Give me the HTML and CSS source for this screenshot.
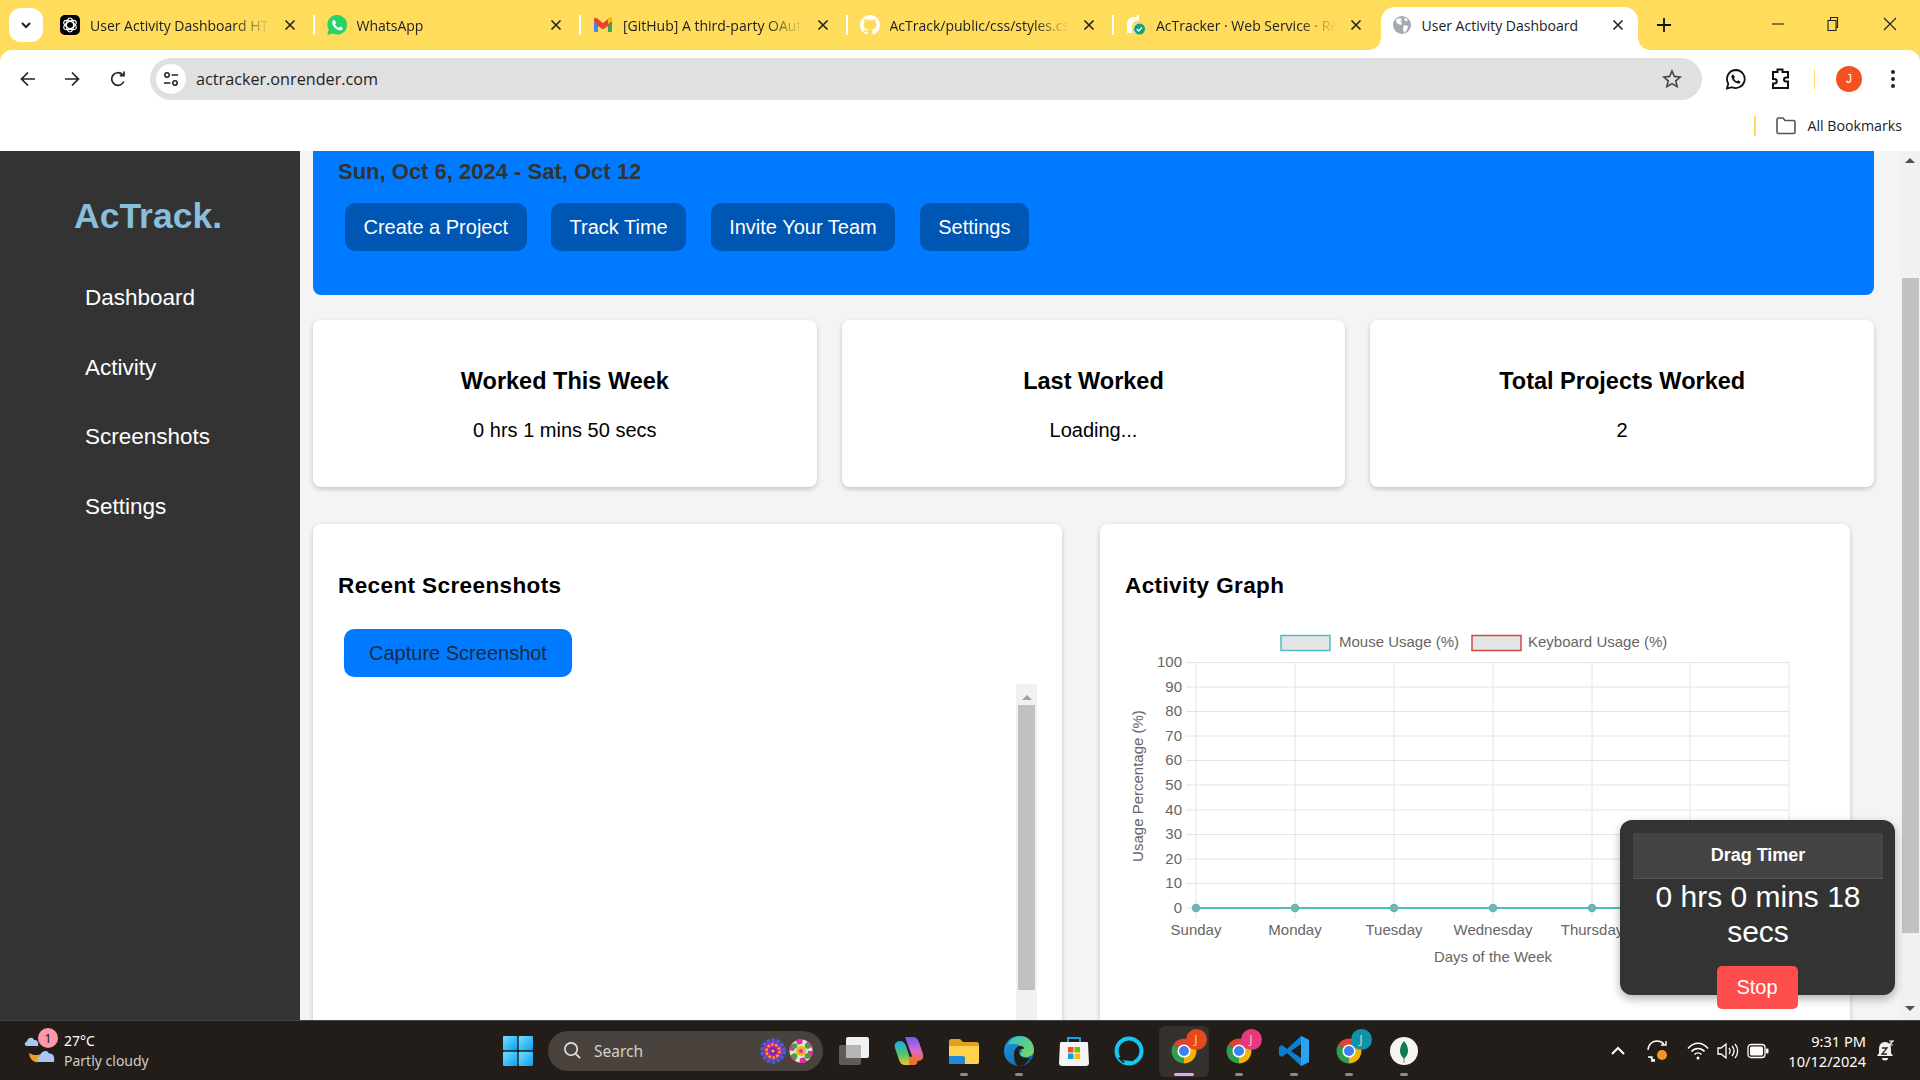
FILE: index.html
```html
<!DOCTYPE html>
<html lang="en">
<head>
    <meta charset="UTF-8">
    <meta name="viewport" content="width=device-width, initial-scale=1.0">
    <title>User Activity Dashboard</title>
    <link rel="stylesheet" href="styles.css">
</head>
<body>
    <!-- Shared icons -->
    <svg class="sprite" aria-hidden="true">
        <defs>
            <linearGradient id="winGrad" x1="0" y1="0" x2="1" y2="1">
                <stop offset="0" stop-color="#6fe3ff"/>
                <stop offset="1" stop-color="#0f9bf5"/>
            </linearGradient>
            <linearGradient id="edgeGrad" x1="0" y1="0" x2="1" y2="1">
                <stop offset="0" stop-color="#1b9de2"/>
                <stop offset="1" stop-color="#0c59a4"/>
            </linearGradient>
            <linearGradient id="edgeGreen" x1="0" y1="0" x2="1" y2="1">
                <stop offset="0" stop-color="#35c1c8"/>
                <stop offset="1" stop-color="#7ad956"/>
            </linearGradient>
            <linearGradient id="copilotA" x1="0" y1="0" x2="0" y2="1">
                <stop offset="0" stop-color="#1fa8ee"/>
                <stop offset=".55" stop-color="#52c46a"/>
                <stop offset="1" stop-color="#f5c33b"/>
            </linearGradient>
            <linearGradient id="copilotB" x1="0" y1="0" x2="0" y2="1">
                <stop offset="0" stop-color="#6a5cf0"/>
                <stop offset=".55" stop-color="#d66ad0"/>
                <stop offset="1" stop-color="#f2703a"/>
            </linearGradient>
            <symbol id="ic-chrome" viewBox="0 0 48 48">
                <path fill="#db4437" d="M24 24 6.700 14A20 20 0 0 1 41.300 14z"/>
                <path fill="#f4b400" d="M24 24 41.300 14A20 20 0 0 1 24 44z"/>
                <path fill="#2f9e4f" d="M24 24 24 44A20 20 0 0 1 6.700 14z"/>
                <circle cx="24" cy="24" r="10.500" fill="#fff"/>
                <circle cx="24" cy="24" r="8" fill="#3f7fee"/>
            </symbol>
            <symbol id="ic-close" viewBox="0 0 12 12">
                <path d="M1.500 1.500 10.500 10.500M10.500 1.500 1.500 10.500" fill="none" stroke="#222" stroke-width="1.600"/>
            </symbol>
        </defs>
    </svg>

    <!-- Tab strip -->
    <div class="tabstrip">
        <div class="tab-search">
            <svg width="12" height="12" viewBox="0 0 12 12"><path d="M2 4 6 8 10 4" fill="none" stroke="#222" stroke-width="2"/></svg>
        </div>
        <div class="tab">
            <svg class="favicon" viewBox="0 0 20 20">
                <rect width="20" height="20" rx="5" fill="#000"/>
                <g fill="none" stroke="#fff" stroke-width="1.200">
                    <ellipse cx="10" cy="10" rx="3.600" ry="7"/>
                    <ellipse cx="10" cy="10" rx="3.600" ry="7" transform="rotate(60 10 10)"/>
                    <ellipse cx="10" cy="10" rx="3.600" ry="7" transform="rotate(120 10 10)"/>
                </g>
            </svg>
            <span class="tab-title">User Activity Dashboard HTML</span>
            <svg class="tab-close"><use href="#ic-close"/></svg>
        </div>
        <div class="tab">
            <svg class="favicon" viewBox="0 0 20 20">
                <path fill="#25d366" d="M10 0a9.600 9.600 0 0 0-8.300 14.500L.3 20l5.600-1.400A9.800 9.800 0 1 0 10 0z"/>
                <path fill="#fff" d="M6.800 4.800c-.5 0-1.600 1-1.600 2.700 0 3 3.700 7.300 7.700 7.900 1.500.2 2.900-1 2.900-2.200 0-.5-2.300-1.700-2.700-1.600-.4.1-.9 1.200-1.300 1.200-1 0-3.500-2.200-3.800-3.300 0-.4 1-1 1-1.500 0-.4-1-3.200-2.200-3.200z"/>
            </svg>
            <span class="tab-title">WhatsApp</span>
            <svg class="tab-close"><use href="#ic-close"/></svg>
        </div>
        <div class="tab">
            <svg class="favicon" viewBox="0 0 20 20">
                <path fill="#4285f4" d="M1 17V5l4 3v9H2a1 1 0 0 1-1-1z"/>
                <path fill="#34a853" d="M15 17V8l4-3v11a1 1 0 0 1-1 1z"/>
                <path fill="#ea4335" d="M5 11 1 6V4.500C1 3 2.700 2.300 3.800 3.200L10 8l6.200-4.800c1.100-.9 2.800-.2 2.800 1.300V6l-4 5-5 3.500z"/>
                <path fill="#fbbc04" d="M15 3.800 19 3v3l-4 3z"/>
            </svg>
            <span class="tab-title">[GitHub] A third-party OAuth application</span>
            <svg class="tab-close"><use href="#ic-close"/></svg>
        </div>
        <div class="tab">
            <svg class="favicon" viewBox="0 0 16 16">
                <path fill="#fff" d="M8 0C3.58 0 0 3.58 0 8c0 3.54 2.29 6.53 5.47 7.59.4.07.55-.17.55-.38 0-.19-.01-.82-.01-1.49-2.01.37-2.53-.49-2.69-.94-.09-.23-.48-.94-.82-1.13-.28-.15-.68-.52-.01-.53.63-.01 1.08.58 1.23.82.72 1.21 1.87.87 2.33.66.07-.52.28-.87.51-1.07-1.78-.2-3.64-.89-3.64-3.95 0-.87.31-1.59.82-2.15-.08-.2-.36-1.02.08-2.12 0 0 .67-.21 2.2.82.64-.18 1.32-.27 2-.27.68 0 1.36.09 2 .27 1.53-1.04 2.2-.82 2.2-.82.44 1.1.16 1.92.08 2.12.51.56.82 1.27.82 2.15 0 3.07-1.87 3.75-3.65 3.95.29.25.54.73.54 1.48 0 1.07-.01 1.93-.01 2.2 0 .21.15.46.55.38A8.013 8.013 0 0 0 16 8c0-4.42-3.58-8-8-8z"/>
            </svg>
            <span class="tab-title">AcTrack/public/css/styles.css</span>
            <svg class="tab-close"><use href="#ic-close"/></svg>
        </div>
        <div class="tab tab-nosep">
            <svg class="favicon" viewBox="0 0 20 20">
                <path fill="#fff" d="M1 18V9c0-4 3-7 7-7h3V0h2v6h-2c-3 0-5 2-5 5v7z"/>
                <path fill="#fff" d="M8 18v-6c0-2 1-3 3-3h2v9z"/>
                <circle cx="13.500" cy="14" r="5.500" fill="#10a37f"/>
                <path d="M10.800 14l2 2 3.200-3.600" fill="none" stroke="#fff" stroke-width="1.400"/>
            </svg>
            <span class="tab-title">AcTracker · Web Service · Render</span>
            <svg class="tab-close"><use href="#ic-close"/></svg>
        </div>
        <div class="tab tab-active">
            <svg class="favicon" viewBox="0 0 20 20">
                <circle cx="10" cy="10" r="9" fill="#a3a9b3"/>
                <path fill="#fff" d="M4 4.500 8 3l2 1.500-1.500 2L10 8l-1 2-3-1-2-2zM12 10l4 1-1 4-3 3-1-4zM13 2.500l3 2.500-2 1.500-2-2z"/>
            </svg>
            <span class="tab-title">User Activity Dashboard</span>
            <svg class="tab-close"><use href="#ic-close"/></svg>
        </div>
        <svg class="tab-new" viewBox="0 0 14 14"><path d="M7 0V14M0 7H14" stroke="#111" stroke-width="1.800"/></svg>
        <div class="win-controls">
            <div class="win-btn"><svg width="14" height="14" viewBox="0 0 14 14"><path d="M1 7H13" stroke="#222" stroke-width="1.100"/></svg></div>
            <div class="win-btn"><svg width="14" height="16" viewBox="0 0 14 16"><path d="M2 4.500h8v10H2zM4.500 4.500V1.500h7v10H10" fill="none" stroke="#222" stroke-width="1.100"/></svg></div>
            <div class="win-btn"><svg width="14" height="14" viewBox="0 0 14 14"><path d="M1 1 13 13M13 1 1 13" stroke="#222" stroke-width="1.100"/></svg></div>
        </div>
    </div>

    <!-- Address bar -->
    <div class="toolbar">
        <div class="nav-btn"><svg width="18" height="18" viewBox="0 0 18 18"><path d="M16 9H3M9 2.500 2.500 9 9 15.500" fill="none" stroke="#222" stroke-width="1.700"/></svg></div>
        <div class="nav-btn"><svg width="18" height="18" viewBox="0 0 18 18"><path d="M2 9H15M9 2.500 15.500 9 9 15.500" fill="none" stroke="#222" stroke-width="1.700"/></svg></div>
        <div class="nav-btn nav-reload"><svg width="18" height="18" viewBox="0 0 18 18"><path d="M14.800 11.500A6.300 6.300 0 1 1 13.500 4.600M15 1.500v4.200h-4.200" fill="none" stroke="#222" stroke-width="1.700"/></svg></div>
        <div class="omnibox">
            <div class="omni-tune">
                <svg width="18" height="18" viewBox="0 0 18 18"><g fill="none" stroke="#222" stroke-width="1.500"><circle cx="5" cy="5" r="2.200"/><path d="M9.500 5H16M2 13H8.500"/><circle cx="13" cy="13" r="2.200"/></g></svg>
            </div>
            <span class="omni-url">actracker.onrender.com</span>
            <svg class="omni-star" viewBox="0 0 20 20"><path d="M10 2l2.400 5.400 5.800.6-4.400 3.900 1.300 5.700L10 14.600l-5.100 3 1.300-5.700L1.800 8l5.800-.6z" fill="none" stroke="#444" stroke-width="1.600"/></svg>
        </div>
        <div class="tool-btn tool-first">
            <svg width="22" height="22" viewBox="0 0 22 22"><path d="M11 2a9 9 0 0 0-7.700 13.600L2 20.500l5-1.300A9 9 0 1 0 11 2z" fill="none" stroke="#111" stroke-width="1.800"/><path d="M8 6.500c-1 0-1.500 1-1.500 2 0 3 3.500 7 7 7 1.200 0 2-.8 2-1.800l-2.300-1.400-1.200 1c-1 0-2.800-2-3-3l1-1.200z" fill="#111"/></svg>
        </div>
        <div class="tool-btn">
            <svg width="20" height="24" viewBox="0 0 20 24"><path d="M2 5h4.500V2.500h5V5H17v5.500h-2a2 2 0 0 0 0 4h2V21H2v-4.500h1.500a2.200 2.200 0 0 0 0-4.500H2z" fill="none" stroke="#111" stroke-width="2"/></svg>
        </div>
        <div class="tool-sep"></div>
        <div class="tool-btn"><span class="avatar">J</span></div>
        <div class="tool-btn">
            <svg width="6" height="20" viewBox="0 0 6 20"><circle cx="3" cy="3" r="2" fill="#222"/><circle cx="3" cy="10" r="2" fill="#222"/><circle cx="3" cy="17" r="2" fill="#222"/></svg>
        </div>
    </div>

    <!-- Bookmarks bar -->
    <div class="bookmarks">
        <div class="bookmarks-sep"></div>
        <svg class="bookmarks-folder" viewBox="0 0 20 18"><path d="M1 2.500C1 1.700 1.700 1 2.500 1H7l2 2.500h8.500c.8 0 1.500.7 1.500 1.500v10c0 .8-.7 1.500-1.500 1.500h-15C1.700 16.500 1 15.800 1 15z" fill="none" stroke="#555" stroke-width="1.600"/></svg>
        <span class="bookmarks-text">All Bookmarks</span>
    </div>

    <!-- The page itself -->
    <div class="page">
        <div class="sidebar">
            <h1 class="logo">AcTrack.</h1>
            <a href="#">Dashboard</a>
            <a href="#">Activity</a>
            <a href="#">Screenshots</a>
            <a href="#">Settings</a>
        </div>

        <div class="content">
            <div class="banner">
                <h2>Sun, Oct 6, 2024 - Sat, Oct 12</h2>
                <div class="banner-actions">
                    <button class="banner-btn">Create a Project</button>
                    <button class="banner-btn">Track Time</button>
                    <button class="banner-btn">Invite Your Team</button>
                    <button class="banner-btn">Settings</button>
                </div>
            </div>

            <div class="stats">
                <div class="stat-card">
                    <h3>Worked This Week</h3>
                    <p>0 hrs 1 mins 50 secs</p>
                </div>
                <div class="stat-card">
                    <h3>Last Worked</h3>
                    <p>Loading...</p>
                </div>
                <div class="stat-card">
                    <h3>Total Projects Worked</h3>
                    <p>2</p>
                </div>
            </div>

            <div class="panels">
                <div class="panel">
                    <h3>Recent Screenshots</h3>
                    <button class="capture-btn">Capture Screenshot</button>
                    <div class="screenshots">
                        <div class="inner-scroll">
                            <span class="arrow-up"></span>
                            <span class="inner-thumb"></span>
                        </div>
                    </div>
                </div>
                <div class="panel">
                    <h3>Activity Graph</h3>
                    <svg class="chart" width="700" height="390" viewBox="0 0 700 390">
                        <!-- legend -->
                        <rect x="156" y="15.500" width="49" height="15" fill="#e5e5e5" stroke="#4bc0c0" stroke-width="1.500"/>
                        <text x="214" y="27" class="chart-label">Mouse Usage (%)</text>
                        <rect x="347" y="15.500" width="49" height="15" fill="#e5e5e5" stroke="#cf4a4a" stroke-width="1.500"/>
                        <text x="403" y="27" class="chart-label">Keyboard Usage (%)</text>
                        <!-- grid -->
                        <path class="chart-grid" d="M61 42.500H664M61 67H664M61 91.500H664M61 116H664M61 140.500H664M61 165H664M61 190H664M61 214.500H664M61 239H664M61 263.500H664M61 288H664"/>
                        <path class="chart-grid" d="M71 42V298M170 42V298M269 42V298M368 42V298M467 42V298M565 42V298M664 42V298"/>
                        <!-- y axis -->
                        <g class="chart-label chart-y">
                            <text x="57" y="47">100</text>
                            <text x="57" y="72">90</text>
                            <text x="57" y="96">80</text>
                            <text x="57" y="121">70</text>
                            <text x="57" y="145">60</text>
                            <text x="57" y="170">50</text>
                            <text x="57" y="195">40</text>
                            <text x="57" y="219">30</text>
                            <text x="57" y="244">20</text>
                            <text x="57" y="268">10</text>
                            <text x="57" y="293">0</text>
                        </g>
                        <text class="chart-label chart-mid" transform="translate(18 166) rotate(-90)">Usage Percentage (%)</text>
                        <!-- x axis, the last two days sit under the timer -->
                        <g class="chart-label chart-mid">
                            <text x="71" y="315">Sunday</text>
                            <text x="170" y="315">Monday</text>
                            <text x="269" y="315">Tuesday</text>
                            <text x="368" y="315">Wednesday</text>
                            <text x="467" y="315">Thursday</text>
                            <text x="368" y="342">Days of the Week</text>
                        </g>
                        <!-- data, all zero so far -->
                        <path d="M71 288H664" stroke="#4bc0c0" stroke-width="2"/>
                        <g fill="#8fa8a8" stroke="#4bc0c0" stroke-width="1.500">
                            <circle cx="71" cy="288" r="3.500"/>
                            <circle cx="170" cy="288" r="3.500"/>
                            <circle cx="269" cy="288" r="3.500"/>
                            <circle cx="368" cy="288" r="3.500"/>
                            <circle cx="467" cy="288" r="3.500"/>
                        </g>
                    </svg>
                </div>
            </div>
        </div>

        <div class="page-scroll">
            <span class="arrow-up"></span>
            <span class="page-thumb"></span>
            <span class="arrow-down"></span>
        </div>

        <!-- Floating timer -->
        <div class="timer">
            <div class="timer-head">Drag Timer</div>
            <div class="timer-value">0 hrs 0 mins 18 secs</div>
            <button class="timer-stop">Stop</button>
        </div>
    </div>

    <!-- Windows taskbar -->
    <div class="taskbar">
        <div class="weather">
            <svg class="weather-icon" viewBox="0 0 34 34">
                <path d="M5 19c3 2 8 3 12 1l3 4c-5 7-14 5-15-5z" fill="#f09a28"/>
                <path d="M3 12c-3 0-3-4 0-4.500C3 4 9 2 10 6c3-.5 5 2 4 6z" fill="#a9c7f2"/>
                <path d="M16 28c-3 0-4-5 0-5.500 0-5 7-8 9-3 4-.5 6 3 5 8.500z" fill="#a9c7f2"/>
            </svg>
            <span class="weather-badge">1</span>
            <div class="weather-text">
                <span class="weather-temp">27°C</span>
                <span class="weather-desc">Partly cloudy</span>
            </div>
        </div>

        <div class="app">
            <svg class="app-icon" viewBox="0 0 30 30"><g fill="url(#winGrad)"><rect x="0" y="0" width="14.300" height="14.300" rx="1"/><rect x="15.700" y="0" width="14.300" height="14.300" rx="1"/><rect x="0" y="15.700" width="14.300" height="14.300" rx="1"/><rect x="15.700" y="15.700" width="14.300" height="14.300" rx="1"/></g></svg>
        </div>

        <div class="searchbox">
            <svg class="search-glass" viewBox="0 0 20 20"><circle cx="8.500" cy="8.500" r="6.500" fill="none" stroke="#e0e0e0" stroke-width="1.800"/><path d="M13.500 13.500 18 18" stroke="#e0e0e0" stroke-width="2"/></svg>
            <span class="search-text">Search</span>
            <svg class="mandala" viewBox="0 0 26 26">
                <circle cx="13" cy="13" r="10" fill="#b524a8"/>
                <circle cx="13" cy="13" r="11" fill="none" stroke="#3f62e0" stroke-width="3.500" stroke-dasharray="3.500 1.500"/>
                <circle cx="13" cy="13" r="6.500" fill="none" stroke="#f0a820" stroke-width="2.500" stroke-dasharray="2.500 1.500"/>
                <circle cx="13" cy="13" r="3.500" fill="#7a2aa0"/>
                <circle cx="13" cy="13" r="1.500" fill="#f5c030"/>
            </svg>
            <svg class="mandala" viewBox="0 0 26 26">
                <circle cx="13" cy="13" r="11.500" fill="#d9ead0"/>
                <circle cx="13" cy="13" r="9.500" fill="none" stroke="#e22fa0" stroke-width="5" stroke-dasharray="6 4"/>
                <g fill="#3aa83a"><circle cx="6.500" cy="8" r="2.800"/><circle cx="19.500" cy="8" r="2.800"/><circle cx="6.500" cy="18" r="2.800"/><circle cx="19.500" cy="18" r="2.800"/></g>
                <circle cx="13" cy="13" r="5" fill="#f5b025"/>
                <circle cx="13" cy="13" r="2" fill="#e22fa0"/>
            </svg>
        </div>

        <div class="app">
            <svg class="app-icon" viewBox="0 0 30 30">
                <rect x="0" y="9" width="22" height="20" rx="2" fill="#5c5c5c"/>
                <rect x="7" y="1" width="23" height="21" rx="2" fill="#f1f1f1"/>
                <rect x="7" y="9" width="15" height="13" fill="#b5b5b5"/>
            </svg>
        </div>
        <div class="app">
            <svg class="app-icon" viewBox="0 0 30 30">
                <path d="M11 1h8c3 0 5 2 6 5l4 12c1 4-1 7-5 7-3 0-5-2-6-5z" fill="url(#copilotB)"/>
                <path d="M19 29h-8c-3 0-5-2-6-5L1 12C0 8 2 5 6 5c3 0 5 2 6 5l3 9c1 4 2 8 4 10z" fill="url(#copilotA)"/>
                <path d="M15 29h5c3 0 4-3 3-5l-2-4-6 1z" fill="#f2703a"/>
            </svg>
        </div>
        <div class="app app-open">
            <svg class="app-icon" viewBox="0 0 30 30">
                <path d="M0 5c0-1 1-2 2-2h9l3 3h14c1 0 2 1 2 2v18c0 1-1 2-2 2H2c-1 0-2-1-2-2z" fill="#e0a020"/>
                <path d="M0 10h30v16c0 1-1 2-2 2H2c-1 0-2-1-2-2z" fill="#ffd24d"/>
                <path d="M0 20h14c1 0 2 1 2 2v6H2c-1 0-2-1-2-2z" fill="#1d8ad8"/>
            </svg>
        </div>
        <div class="app app-open">
            <svg class="app-icon" viewBox="0 0 30 30">
                <circle cx="15" cy="15" r="15" fill="url(#edgeGrad)"/>
                <path d="M4 8C7 2 12 0 16 0c8 0 14 6 14 14 0 5-4 7-8 7-3 0-6-1-6-3 0-1 2-1 2-4 0-3-3-6-7-6-3 0-5 0-7 0z" fill="url(#edgeGreen)"/>
                <path d="M10 18c0-5 3-8 7-8 2 0 3 1 3 3-2-1-5 0-5 3 0 4 5 7 11 6-3 5-7 8-11 8-3 0-5-5-5-12z" fill="#221c18"/>
            </svg>
        </div>
        <div class="app">
            <svg class="app-icon" viewBox="0 0 30 30">
                <path d="M9 6V2h12v4" fill="none" stroke="#12a5e8" stroke-width="2"/>
                <path d="M1 7c0-1 1-1 1-1h26s1 0 1 1l1 20c0 2-1 3-3 3H3c-2 0-3-1-3-3z" fill="#f5f5f5"/>
                <rect x="9" y="11" width="5.500" height="5.500" fill="#f25022"/>
                <rect x="15.500" y="11" width="5.500" height="5.500" fill="#7fba00"/>
                <rect x="9" y="17.500" width="5.500" height="5.500" fill="#00a4ef"/>
                <rect x="15.500" y="17.500" width="5.500" height="5.500" fill="#ffb900"/>
            </svg>
        </div>
        <div class="app">
            <svg class="app-icon" viewBox="0 0 30 30">
                <circle cx="15" cy="15" r="12.500" fill="none" stroke="#12c8f0" stroke-width="4"/>
                <path d="M4 22l5 5 5-3-6-4z" fill="#221c18"/>
                <path d="M8 24l8 5 1-4z" fill="#12c8f0"/>
            </svg>
        </div>
        <div class="app app-active">
            <svg class="app-icon"><use href="#ic-chrome"/></svg>
            <span class="app-badge badge-orange">J</span>
        </div>
        <div class="app app-open">
            <svg class="app-icon"><use href="#ic-chrome"/></svg>
            <span class="app-badge badge-pink">J</span>
        </div>
        <div class="app app-open">
            <svg class="app-icon" viewBox="0 0 30 30">
                <path d="M22 0 30 4V26L22 30 8 17 3 21 0 19V11L3 9 8 13z" fill="#0a7fd0"/>
                <path d="M22 0 30 4V26L22 30z" fill="#2aa4f0"/>
                <path d="M22 8V22L12 15z" fill="#221c18"/>
            </svg>
        </div>
        <div class="app app-open">
            <svg class="app-icon"><use href="#ic-chrome"/></svg>
            <span class="app-badge badge-teal">J</span>
        </div>
        <div class="app app-open">
            <svg class="app-icon" viewBox="0 0 30 30">
                <circle cx="15" cy="15" r="14" fill="#f5f5f0"/>
                <path d="M15 5c3 3 4 7 4 10 0 3-2 6-4 8-2-2-4-5-4-8 0-3 1-7 4-10z" fill="#0f7a52"/>
                <path d="M15 22v5" stroke="#8a8a80" stroke-width="1"/>
            </svg>
        </div>

        <div class="tray">
            <svg class="tray-icon tray-chevron" viewBox="0 0 16 10"><path d="M2 8 8 2 14 8" fill="none" stroke="#fff" stroke-width="2"/></svg>
            <svg class="tray-icon tray-sync" viewBox="0 0 24 24">
                <path d="M2 11C2 5 7 2 11 2c3 0 5 1 7 3M20 2v4h-5M5 22h4M2 18h4v4M4 18c2 2 3 3 5 3" fill="none" stroke="#fff" stroke-width="1.400"/>
                <circle cx="16" cy="16" r="5" fill="#f7931e"/>
            </svg>
            <svg class="tray-icon tray-wifi" viewBox="0 0 22 18">
                <g fill="none" stroke="#fff" stroke-width="1.500"><path d="M1 6.500C7-.5 15-.5 21 6.500"/><path d="M4.500 9.500C8 5.500 14 5.500 17.500 9.500"/><path d="M7.500 12.500C9.500 10.500 12.500 10.500 14.500 12.500"/></g>
                <circle cx="11" cy="16" r="1.500" fill="#fff"/>
            </svg>
            <svg class="tray-icon tray-vol" viewBox="0 0 22 18">
                <path d="M1 6v6h3l5 4V2L4 6z" fill="none" stroke="#fff" stroke-width="1.300"/>
                <path d="M12 6c1.500 2 1.500 4 0 6M15 4c2.500 3 2.500 7 0 10M18 2c3.500 4 3.500 10 0 14" fill="none" stroke="#fff" stroke-width="1.300"/>
            </svg>
            <svg class="tray-icon tray-batt" viewBox="0 0 22 16">
                <rect x="1" y="1.500" width="17" height="13" rx="3" fill="none" stroke="#fff" stroke-width="1.300"/>
                <rect x="3" y="3.500" width="13" height="9" rx="1.500" fill="#fff"/>
                <rect x="19" y="5.500" width="2.500" height="5" rx="1" fill="#fff"/>
            </svg>
            <div class="clock">
                <span>9:31 PM</span>
                <span>10/12/2024</span>
            </div>
            <svg class="tray-icon tray-bell" viewBox="0 0 20 24">
                <path d="M10 3c-4 0-6 3-6 7v4l-2 3h16l-2-3v-4c0-4-2-7-6-7z" fill="#f0f0f0"/>
                <path d="M7 19h6a3 2.500 0 0 1-6 0z" fill="#f0f0f0"/>
                <path d="M7 9h5l-5 6h5" fill="none" stroke="#222" stroke-width="1.300"/>
                <path d="M14 2h4l-4 4h4" fill="none" stroke="#fff" stroke-width="1.200"/>
            </svg>
        </div>
    </div>
</body>
</html>
```

FILE: styles.css
```css
/* Basic reset */
* {
    margin: 0;
    padding: 0;
    box-sizing: border-box;
}

body {
    width: 1920px;
    height: 1080px;
    overflow: hidden;
    display: flex;
    flex-direction: column;
    background-color: #ffdc5c;
    font-family: "Liberation Sans", Arial, sans-serif;
}

.sprite {
    width: 0;
    height: 0;
    flex: none;
}

/* Browser tab strip */
.tabstrip {
    height: 50px;
    flex: none;
    display: flex;
    align-items: flex-end;
    padding-left: 9px;
    font-family: "Open Sans", sans-serif;
    font-size: 14px;
    color: #222;
}

.tab-search {
    width: 34px;
    height: 34px;
    margin: 0 5px 8px 0;
    background-color: #fff;
    border-radius: 12px;
    display: flex;
    justify-content: center;
    align-items: center;
}

.tab {
    width: 266.5px;
    height: 43px;
    padding: 0 15px 7px 12px;
    display: flex;
    align-items: center;
    position: relative;
}

.tab::after {
    content: "";
    position: absolute;
    right: 0;
    top: 8px;
    width: 2px;
    height: 20px;
    background-color: #fff;
}

.tab-nosep::after {
    display: none;
}

.favicon {
    width: 20px;
    height: 20px;
    flex: none;
    margin-right: 10px;
}

.tab-title {
    flex: 1;
    min-width: 0;
    margin-right: 10px;
    white-space: nowrap;
    overflow: hidden;
    -webkit-mask-image: linear-gradient(to right, #000 80%, transparent 100%);
    mask-image: linear-gradient(to right, #000 80%, transparent 100%);
}

.tab-close {
    width: 12px;
    height: 12px;
    margin: 0 4px;
    flex: none;
}

.tab-active {
    width: 257px;
    padding: 0 10px 7px 11px;
    background-color: #fff;
    border-radius: 14px 14px 0 0;
}

.tab-active .tab-title {
    -webkit-mask-image: none;
    mask-image: none;
}

/* little flares at the bottom of the active tab */
.tab-active::before,
.tab-active::after {
    content: "";
    display: block;
    position: absolute;
    top: auto;
    bottom: 0;
    width: 12px;
    height: 12px;
    background-color: transparent;
}

.tab-active::before {
    left: -12px;
    background-image: radial-gradient(circle at 0 0, #ffdc5c 11.5px, #fff 12px);
}

.tab-active::after {
    right: -12px;
    background-image: radial-gradient(circle at 100% 0, #ffdc5c 11.5px, #fff 12px);
}

.tab-new {
    width: 14px;
    height: 14px;
    margin: 0 0 18px 19px;
    flex: none;
}

.win-controls {
    margin-left: auto;
    display: flex;
    height: 50px;
}

.win-btn {
    width: 55px;
    padding-bottom: 2px;
    display: flex;
    justify-content: center;
    align-items: center;
}

.win-btn:last-child {
    width: 60px;
}

/* Address bar */
.toolbar {
    height: 50px;
    flex: none;
    padding: 8px 0 0 6px;
    background-color: #fff;
    border-radius: 12px 12px 0 0;
    display: flex;
    align-items: center;
}

.nav-btn {
    width: 44px;
    display: flex;
    justify-content: center;
}

.nav-reload {
    margin-left: 2px;
}

.omnibox {
    width: 1552px;
    height: 42px;
    margin-left: 10px;
    background-color: #e0e0e0;
    border-radius: 21px;
    display: flex;
    align-items: center;
    font-family: "Open Sans", sans-serif;
}

.omni-tune {
    width: 30px;
    height: 30px;
    margin-left: 6px;
    background-color: #fff;
    border-radius: 50%;
    display: flex;
    justify-content: center;
    align-items: center;
}

.omni-url {
    margin-left: 10px;
    font-size: 16.2px;
    color: #222;
}

.omni-star {
    width: 20px;
    height: 20px;
    margin: 0 20px 0 auto;
}

.tool-btn {
    width: 44px;
    display: flex;
    justify-content: center;
    align-items: center;
}

.tool-first {
    margin: 0 1px 0 12px;
}

.tool-sep {
    width: 1px;
    height: 20px;
    margin: 0 12px 0 11px;
    background-color: #ffdc5c;
}

.avatar {
    width: 26px;
    height: 26px;
    border-radius: 50%;
    background-color: #f4511e;
    color: #fff;
    font-size: 12px;
    line-height: 26px;
    text-align: center;
}

/* Bookmarks bar */
.bookmarks {
    height: 51px;
    flex: none;
    padding-right: 18px;
    background-color: #fff;
    display: flex;
    justify-content: flex-end;
    align-items: center;
    font-family: "Open Sans", sans-serif;
    font-size: 14.2px;
    color: #222;
}

.bookmarks-sep {
    width: 2px;
    height: 20px;
    margin-right: 20px;
    background-color: #ffdc5c;
}

.bookmarks-folder {
    width: 20px;
    height: 18px;
    margin-right: 11px;
}

/* Page layout */
.page {
    flex: 1;
    min-height: 0;
    display: flex;
    position: relative;
    background-color: #f4f4f4;
}

.sidebar {
    width: 300px;
    flex: none;
    padding: 44px 0 0 85px;
    background-color: #333;
}

.logo {
    margin: 0 0 26px -11px;
    font-size: 35.5px;
    line-height: 42px;
    font-weight: bold;
    color: #87bfdc;
}

.sidebar a {
    display: block;
    height: 69.5px;
    line-height: 69.5px;
    font-size: 22.5px;
    color: #fff;
    text-decoration: none;
}

.content {
    flex: 1;
    min-width: 0;
    padding: 0 26px 0 13px;
    overflow: hidden;
}

/* Blue banner */
.banner {
    height: 144px;
    padding: 8px 25px 0;
    background-color: #007bff;
    border-radius: 0 0 8px 8px;
}

.banner h2 {
    font-size: 22px;
    line-height: 26px;
    color: #333;
}

.banner-actions {
    display: flex;
    gap: 24.5px;
    margin: 18px 0 0 7px;
}

.banner-btn {
    height: 48px;
    padding: 0 18.5px;
    border: none;
    border-radius: 10px;
    background-color: #0056b3;
    color: #fff;
    font-family: inherit;
    font-size: 20px;
}

/* Stat cards */
.stats {
    display: grid;
    grid-template-columns: repeat(3, 1fr);
    gap: 25px;
    margin-top: 25px;
}

.stat-card {
    height: 167px;
    padding-top: 47px;
    background-color: #fff;
    border-radius: 8px;
    box-shadow: 0 2px 5px rgba(0, 0, 0, 0.2);
    text-align: center;
}

.stat-card h3 {
    margin-bottom: 21px;
    font-size: 23.5px;
    line-height: 28px;
    color: #000;
}

.stat-card p {
    font-size: 20px;
    line-height: 28px;
    color: #000;
}

/* Lower panels */
.panels {
    display: grid;
    grid-template-columns: 749px 750px;
    column-gap: 38px;
    margin-top: 37px;
}

.panel {
    height: 600px;
    padding: 48px 25px 0;
    background-color: #fff;
    border-radius: 8px;
    box-shadow: 0 2px 5px rgba(0, 0, 0, 0.2);
}

.panel h3 {
    font-size: 22.5px;
    line-height: 28px;
    letter-spacing: 0.4px;
    color: #000;
}

.capture-btn {
    display: block;
    width: 228px;
    height: 48px;
    margin: 29px 0 0 6px;
    border: none;
    border-radius: 10px;
    background-color: #007bff;
    color: #1b2a3a;
    font-family: inherit;
    font-size: 20px;
}

.screenshots {
    height: 400px;
    margin-top: 7px;
    display: flex;
    justify-content: flex-end;
}

.inner-scroll {
    width: 21px;
    background-color: #f1f1f1;
    display: flex;
    flex-direction: column;
    align-items: center;
    padding-top: 11px;
}

.inner-thumb {
    width: 17px;
    height: 285px;
    margin-top: 5px;
    background-color: #c1c1c1;
}

.chart {
    display: block;
    margin-top: 20px;
}

.chart-label {
    font-size: 15px;
    fill: #666;
}

.chart-y {
    text-anchor: end;
}

.chart-mid {
    text-anchor: middle;
}

.chart-grid {
    fill: none;
    stroke: #e4e4e4;
    stroke-width: 1;
}

/* Page scrollbar */
.page-scroll {
    width: 20px;
    flex: none;
    background-color: #f1f1f1;
    display: flex;
    flex-direction: column;
    align-items: center;
    padding-top: 7px;
}

.page-thumb {
    width: 17px;
    height: 655px;
    margin-top: 115px;
    background-color: #c1c1c1;
}

.arrow-up {
    width: 0;
    height: 0;
    border-left: 5px solid transparent;
    border-right: 5px solid transparent;
    border-bottom: 5px solid #505050;
}

.inner-scroll .arrow-up {
    border-bottom-color: #a0a0a0;
}

.arrow-down {
    width: 0;
    height: 0;
    margin-top: 73px;
    border-left: 5px solid transparent;
    border-right: 5px solid transparent;
    border-top: 5px solid #505050;
}

/* Floating timer */
.timer {
    position: absolute;
    right: 25px;
    bottom: 25px;
    width: 275px;
    height: 175px;
    padding: 13px 12px 0 13px;
    background-color: #333;
    border-radius: 12px;
    box-shadow: 0 4px 10px rgba(0, 0, 0, 0.3);
    color: #fff;
    text-align: center;
}

.timer-head {
    height: 46px;
    line-height: 44px;
    font-size: 18px;
    font-weight: bold;
    background-color: #444;
    border-bottom: 1px solid #555;
}

.timer-value {
    font-size: 30px;
    line-height: 35px;
}

.timer-stop {
    width: 81px;
    height: 43px;
    margin: 17px 2px 0 0;
    border: none;
    border-radius: 5px;
    background-color: #ff4d4d;
    color: #fff;
    font-family: inherit;
    font-size: 20px;
}

/* Windows taskbar */
.taskbar {
    height: 60px;
    flex: none;
    background-color: #231d19;
    border-top: 1px solid #444;
    display: flex;
    align-items: center;
    font-family: "Noto Sans", sans-serif;
    color: #fff;
}

.weather {
    width: 490px;
    flex: none;
    padding-left: 24px;
    display: flex;
    align-items: center;
    position: relative;
}

.weather-icon {
    width: 34px;
    height: 34px;
    margin-right: 6px;
}

.weather-badge {
    position: absolute;
    left: 38px;
    top: -3px;
    width: 20px;
    height: 20px;
    border-radius: 50%;
    background-color: #ff98a8;
    color: #222;
    font-size: 13px;
    line-height: 20px;
    text-align: center;
}

.weather-text {
    display: flex;
    flex-direction: column;
    font-size: 14px;
    line-height: 20px;
}

.weather-desc {
    color: #ccc;
}

.app {
    width: 55px;
    height: 50px;
    flex: none;
    display: flex;
    justify-content: center;
    align-items: center;
    position: relative;
}

.app-icon {
    width: 30px;
    height: 30px;
}

/* small dot under an open app */
.app-open::after,
.app-active::after {
    content: "";
    position: absolute;
    left: 50%;
    bottom: 0;
    width: 8px;
    height: 3px;
    margin-left: -4px;
    border-radius: 2px;
    background-color: #8e8a86;
}

.app-active::before {
    content: "";
    position: absolute;
    left: 2px;
    right: 3px;
    top: 0;
    bottom: -1px;
    border-radius: 6px;
    background-color: #35312d;
}

.app-active::after {
    width: 20px;
    margin-left: -10px;
    background-color: #e0a8e8;
}

.app-active .app-icon {
    position: relative;
}

.app-badge {
    position: absolute;
    left: 29px;
    top: 3px;
    width: 21px;
    height: 21px;
    border-radius: 50%;
    color: #f3c9b8;
    font-size: 12px;
    line-height: 21px;
    text-align: center;
}

.badge-orange {
    background-color: #e8491a;
}

.badge-pink {
    background-color: #e6397f;
}

.badge-teal {
    background-color: #0e93a8;
}

.searchbox {
    width: 275px;
    height: 40px;
    flex: none;
    margin: 0 3.5px 0 3px;
    padding: 0 9px 0 15px;
    background-color: #4a423d;
    border-radius: 20px;
    display: flex;
    align-items: center;
}

.search-glass {
    width: 19px;
    height: 19px;
    margin-right: 12px;
}

.search-text {
    flex: 1;
    font-size: 15.5px;
    color: #d4d0cc;
}

.mandala {
    width: 26px;
    height: 26px;
    margin-left: 2px;
}

.tray {
    margin-left: auto;
    padding-right: 25px;
    display: flex;
    align-items: center;
}

.tray-chevron {
    width: 16px;
    height: 10px;
    margin-right: 20px;
}

.tray-sync {
    width: 24px;
    height: 24px;
    margin-right: 17px;
}

.tray-wifi {
    width: 22px;
    height: 18px;
    margin-right: 8px;
}

.tray-vol {
    width: 22px;
    height: 18px;
    margin-right: 8px;
}

.tray-batt {
    width: 22px;
    height: 16px;
}

.clock {
    width: 90px;
    margin-left: 7px;
    display: flex;
    flex-direction: column;
    align-items: flex-end;
    font-size: 14.6px;
    line-height: 20px;
}

.tray-bell {
    width: 20px;
    height: 24px;
    margin-left: 9px;
}
```
